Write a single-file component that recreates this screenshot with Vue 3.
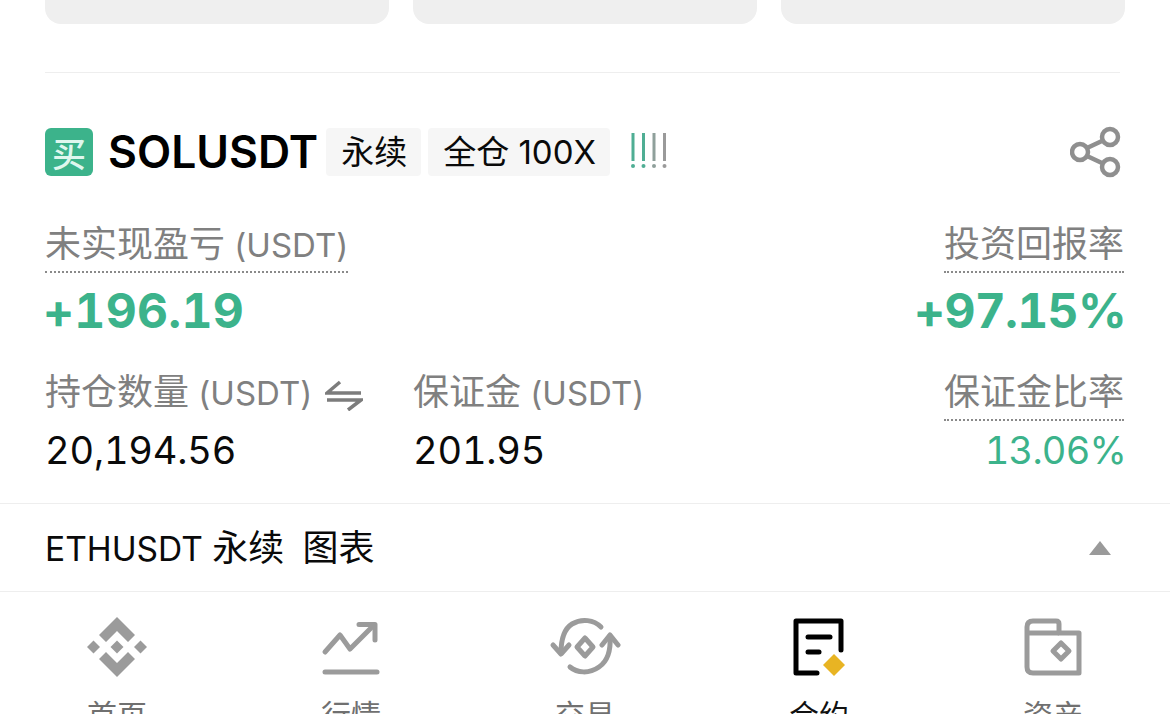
<script setup>
</script>

<template>
  <div class="screen">
    <div class="top-cards">
      <div class="top-card"></div>
      <div class="top-card"></div>
      <div class="top-card"></div>
    </div>
    <div class="top-divider"></div>

    <section class="position">
      <header class="position-head">
        <span class="side-badge">买</span>
        <h1 class="symbol">SOLUSDT</h1>
        <span class="tag">永续</span>
        <span class="tag">全仓 100X</span>
        <svg class="risk" width="38" height="38" viewBox="0 0 38 38" aria-hidden="true">
          <g fill="#4fae94">
            <rect x="1.500" y="0" width="3" height="28" />
            <circle cx="3" cy="33" r="2" />
            <rect x="12" y="0" width="3" height="28" />
            <circle cx="13.500" cy="33" r="2" />
          </g>
          <g fill="#8fa09b">
            <rect x="22.500" y="0" width="3" height="28" />
            <circle cx="24" cy="33" r="2" />
          </g>
          <g fill="#9a9a9a">
            <rect x="33" y="0" width="3" height="28" />
            <circle cx="34.500" cy="33" r="2" />
          </g>
        </svg>
        <svg class="share" width="52" height="52" viewBox="0 0 52 52" fill="none" stroke="#8f8f8f" stroke-width="4.5" aria-hidden="true">
          <circle cx="10" cy="26" r="8" />
          <circle cx="40" cy="11" r="8" />
          <circle cx="40" cy="41" r="8" />
          <path d="M17 22 33 14.500M17 30l16 7.500" />
        </svg>
      </header>

      <div class="stats">
        <div class="stat">
          <span class="label label--dotted"><span class="cjk">未实现盈亏</span> (USDT)</span>
          <span class="pnl pnl--left">+196.19</span>
        </div>
        <div></div>
        <div class="stat stat--right">
          <span class="label label--dotted"><span class="cjk">投资回报率</span></span>
          <span class="pnl pnl--right">+97.15%</span>
        </div>

        <div class="stat stat--lower">
          <span class="label"><span class="cjk">持仓数量</span> (USDT)<svg class="swap" width="38" height="32" viewBox="0 0 38 32" fill="none" stroke="#7c7c7c" stroke-width="3.500" aria-hidden="true"><path d="M15 3 2 14H36M2 21H36L23 31" /></svg></span>
          <span class="amount">20,194.56</span>
        </div>
        <div class="stat stat--lower">
          <span class="label"><span class="cjk">保证金</span> (USDT)</span>
          <span class="amount">201.95</span>
        </div>
        <div class="stat stat--right stat--lower">
          <span class="label label--dotted"><span class="cjk">保证金比率</span></span>
          <span class="amount amount--green">13.06%</span>
        </div>
      </div>
    </section>

    <div class="chart-row">
      <span class="chart-title">ETHUSDT <span class="cjk chart-cjk">永续&nbsp; 图表</span></span>
      <svg width="24" height="16" viewBox="0 0 24 16" aria-hidden="true">
        <path d="M12 1 23 15H1Z" fill="#9a9a9a" />
      </svg>
    </div>

    <nav class="tabbar">
      <div class="tab">
        <svg width="60" height="60" viewBox="0 0 60 60" fill="#9b9b9b" aria-hidden="true">
          <path d="M30 0 48 18 41 25 30 14 19 25 12 18Z" />
          <path d="M30 60 48 42 41 35 30 46 19 35 12 42Z" />
          <path d="M30 23.500 36.500 30 30 36.500 23.500 30Z" />
          <path d="M6.500 23.500 13 30 6.500 36.500 0 30Z" />
          <path d="M53.500 23.500 60 30 53.500 36.500 47 30Z" />
        </svg>
        <span>首页</span>
      </div>
      <div class="tab">
        <svg width="60" height="60" viewBox="0 0 60 60" fill="none" stroke="#9b9b9b" stroke-width="5" stroke-linecap="round" stroke-linejoin="round" aria-hidden="true">
          <path d="M4 35 19 18 29 32 52 9" />
          <path d="M38 7.500H54V23" />
          <path d="M4 55H56" />
        </svg>
        <span>行情</span>
      </div>
      <div class="tab">
        <svg width="72" height="60" viewBox="0 0 72 60" fill="none" stroke="#9b9b9b" stroke-width="5" stroke-linecap="round" stroke-linejoin="round" aria-hidden="true">
          <path d="M52 10C45 3 33 1 23 7 15 12 12 21 12 36" />
          <path d="M4 28 12 37 20 28" />
          <path d="M61 19C62 34 59 44 50 50 40 57 28 56 21 50" />
          <path d="M53 28 61 18 69 28" />
          <path d="M36 21 44 30 36 39 28 30Z" />
        </svg>
        <span>交易</span>
      </div>
      <div class="tab tab--active">
        <svg class="contract" width="60" height="60" viewBox="0 0 60 60" fill="none" stroke="#000" stroke-width="5" stroke-linecap="round" stroke-linejoin="round" aria-hidden="true">
          <path d="M51 33V4H6V56H27" />
          <path d="M18 20H40" />
          <path d="M18 35H29" />
          <path d="M44 37 55 48 44 59 33 48Z" fill="#e8b423" stroke="none" />
        </svg>
        <span>合约</span>
      </div>
      <div class="tab">
        <svg width="60" height="60" viewBox="0 0 60 60" fill="none" stroke="#9b9b9b" stroke-width="5" stroke-linejoin="round" aria-hidden="true">
          <path d="M4 50V10Q4 4 10 4H33Q36 4 36 7V16H56V56H10Q4 56 4 50Z" />
          <path d="M4 16H36" />
          <path d="M38 26 46 34 38 42 30 34Z" />
        </svg>
        <span>资产</span>
      </div>
    </nav>
  </div>
</template>

<style scoped>
.screen {
  width: 1170px;
  height: 714px;
  overflow: hidden;
  background: #fff;
  display: flex;
  flex-direction: column;
  font-family: Inter, "Noto Sans CJK SC", sans-serif;
  color: #0a0a0a;
}

.top-cards {
  display: grid;
  grid-template-columns: repeat(3, 344px);
  gap: 24px;
  padding-left: 45px;
  flex: none;
}

.top-card {
  height: 24px;
  background: #efefef;
  border-radius: 0 0 16px 16px;
}

.top-divider {
  flex: none;
  height: 1px;
  margin: 48px 50px 0 45px;
  background: #eeeeee;
}

.position {
  flex: none;
  padding: 55px 46px 0 45px;
}

.position-head {
  display: flex;
  align-items: center;
  height: 48px;
}

.side-badge {
  width: 48px;
  height: 48px;
  border-radius: 6px;
  background: #3cb38b;
  color: #dff7ee;
  font-size: 34px;
  font-weight: 500;
  display: flex;
  align-items: center;
  justify-content: center;
}

.symbol {
  margin: 0 8px 0 15px;
  font-size: 44.500px;
  font-weight: 600;
  line-height: 48px;
  color: #000;
}

.tag {
  height: 48px;
  padding: 0 14px 0 15px;
  margin-right: 7px;
  border-radius: 4px;
  background: #f6f6f6;
  font-size: 33px;
  line-height: 48px;
  white-space: nowrap;
}

.risk {
  margin-left: 13px;
}

.share {
  margin-left: auto;
  margin-right: 2px;
}

.stats {
  display: grid;
  grid-template-columns: 368px 1fr auto;
  margin-top: 46px;
}

.stat {
  display: flex;
  flex-direction: column;
  align-items: flex-start;
}

.stat--right {
  align-items: flex-end;
}

.stat--lower {
  margin-top: 31px;
}

.label {
  display: inline-block;
  height: 44px;
  padding-bottom: 5px;
  font-size: 33px;
  line-height: 44px;
  color: #808080;
  white-space: nowrap;
  border-bottom: 2px solid transparent;
}

.cjk {
  font-size: 36px;
}

.label--dotted {
  border-bottom: 2px dotted #8a8a8a;
}

.swap {
  margin-left: 13px;
  vertical-align: -6px;
}

.pnl {
  margin-top: 10px;
  font-size: 48px;
  font-weight: 700;
  line-height: 56px;
  letter-spacing: 0.300px;
  font-variant-numeric: tabular-nums;
  color: #3cb38b;
}

.pnl--left {
  margin-left: -2px;
}

.pnl--right {
  margin-right: -2px;
  letter-spacing: -0.700px;
}

.amount {
  margin-top: 4px;
  font-size: 38px;
  line-height: 50px;
  letter-spacing: -0.200px;
  font-variant-numeric: tabular-nums;
}

.amount--green {
  margin-right: -2px;
  letter-spacing: -0.800px;
  color: #3cb38b;
}

.chart-row {
  flex: none;
  box-sizing: border-box;
  height: 89px;
  margin-top: 28px;
  padding: 0 58px 0 46px;
  border-top: 1px solid #eeeeee;
  border-bottom: 1px solid #eeeeee;
  display: flex;
  align-items: center;
  justify-content: space-between;
  font-size: 33.500px;
}

.chart-title {
  margin-top: -6px;
  margin-left: -1px;
}

.chart-cjk {
  word-spacing: -1px;
}

.tabbar {
  flex: none;
  display: grid;
  grid-template-columns: repeat(5, 234px);
  padding-top: 25px;
}

.tab {
  display: flex;
  flex-direction: column;
  align-items: center;
  font-size: 30px;
  line-height: 40px;
  color: #707070;
}

.tab span {
  margin-top: 18px;
}

.contract {
  margin-left: 2px;
}

.tab--active {
  color: #111;
}
</style>
